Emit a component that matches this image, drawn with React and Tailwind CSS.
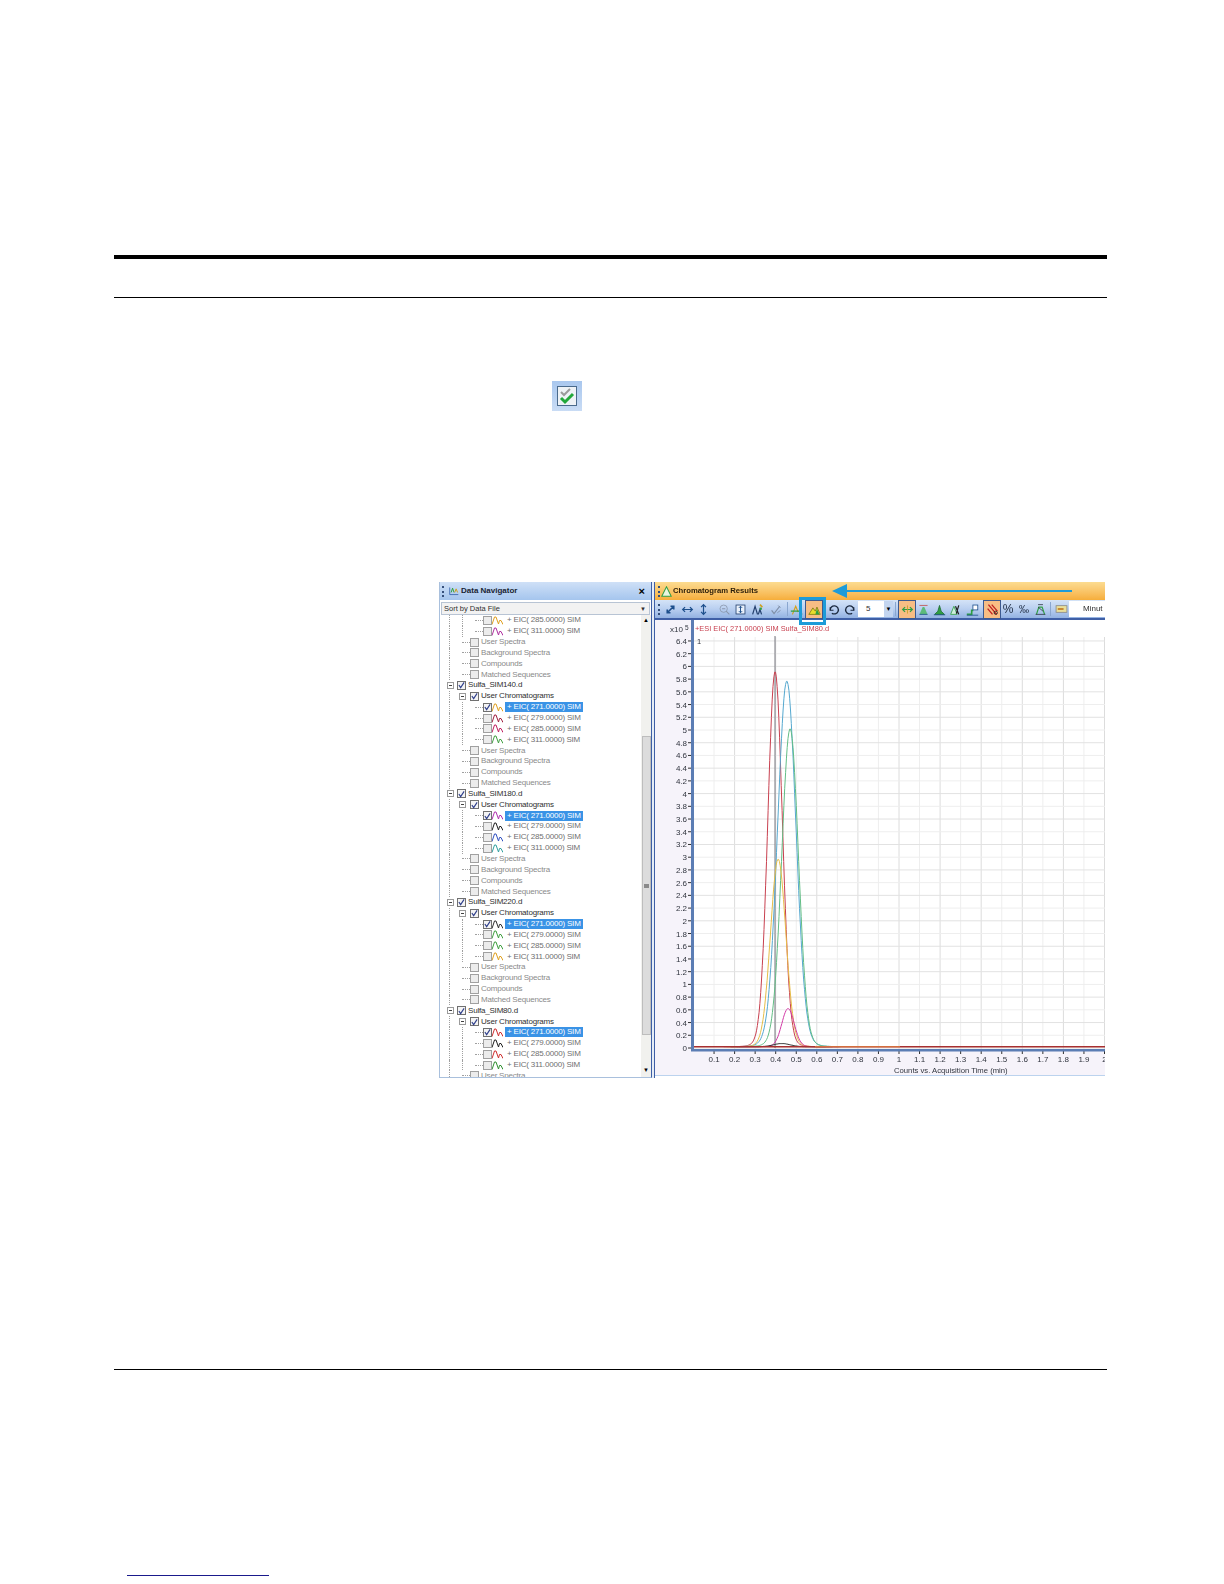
const FONT = "font-['Liberation_Sans',Arial,sans-serif]"

// tree data, one entry per data file
const FILES = [
  { name: 'Sulfa_SIM140.d', colors: ['#e0a020', '#a02040', '#c02060', '#40a040'] },
  { name: 'Sulfa_SIM180.d', colors: ['#b030b0', '#202020', '#3050c0', '#30a0a0'] },
  { name: 'Sulfa_SIM220.d', colors: ['#303030', '#40a040', '#40a040', '#e0a020'] },
  { name: 'Sulfa_SIM80.d', colors: ['#d03030', '#202020', '#d03030', '#309030'] },
]
const IONS = ['271.0000', '279.0000', '285.0000', '311.0000']
const EXTRAS = ['User Spectra', 'Background Spectra', 'Compounds', 'Matched Sequences']

const x = (t) => 693.5 + 205.5 * t
const y = (v) => 1048 - 63.6 * v

const CURVES = [
  { peak: 0.397, h: 5.9, s: 0.035, color: '#c8404f' },
  { peak: 0.454, h: 5.75, s: 0.044, color: '#55a8cf' },
  { peak: 0.47, h: 5.0, s: 0.04, color: '#62bd85' },
  { peak: 0.412, h: 2.95, s: 0.037, color: '#e6bd48' },
  { peak: 0.46, h: 0.6, s: 0.03, color: '#d23aa6' },
  { peak: 0.43, h: 0.05, s: 0.04, color: '#222222' },
]

function curvePath({ peak, h, s }) {
  let d = ''
  for (let t = peak - 0.25; t <= peak + 0.25; t += 0.004) {
    const g = (sd, a) => a * Math.exp(-((t - peak) ** 2) / (2 * sd * sd))
    // small wide tail under the peak, the real traces do not end sharply
    const v = g(s, h * 0.98) + g(s * 1.9, h * 0.02) + 0.02
    d += `${d ? 'L' : 'M'}${x(t).toFixed(1)} ${y(v).toFixed(1)}`
  }
  return d
}

function Check({ checked, dim }) {
  return (
    <span className={`w-[9px] h-[9px] shrink-0 border flex items-center justify-center ${dim ? 'border-[#a0a0a0] bg-[#ececec]' : 'border-[#707070] bg-[#f4f4f4]'}`}>
      {checked && (
        <svg viewBox="0 0 8 8" className="w-[8px] h-[8px]">
          <path d="M1 4l2 3 4-6" fill="none" stroke="#30408c" strokeWidth="1.3" />
        </svg>
      )}
    </span>
  )
}

function Expander() {
  return (
    <span className="w-[7px] h-[7px] shrink-0 border border-[#9a9a9a] bg-white flex items-center justify-center">
      <span className="w-[3px] h-px bg-[#404040]" />
    </span>
  )
}

function Guide({ w }) {
  return <span className={`shrink-0 border-l border-dotted border-[#a0a0a0] ${w}`} />
}

function Dash({ w }) {
  return <span className={`shrink-0 self-center border-t border-dotted border-[#a0a0a0] ${w}`} />
}

function Row({ children }) {
  return <div className="flex items-stretch h-[10.85px] pl-[9px] text-[8px] tracking-[-0.2px] leading-[10px] whitespace-nowrap">{children}</div>
}

function RootRow({ name }) {
  return (
    <div className="flex items-center h-[10.85px] pl-[7px] text-[8px] tracking-[-0.2px] leading-[10px] whitespace-nowrap text-[#303030]">
      <Expander />
      <span className="w-[3px]" />
      <Check checked />
      <span className="ml-[2px]">{name}</span>
    </div>
  )
}

function ChromHeader() {
  return (
    <Row>
      <Guide w="w-[10px]" />
      <span className="self-center flex items-center">
        <Expander />
        <span className="w-[4px]" />
        <Check checked />
        <span className="ml-[2px] text-[#303030]">User Chromatograms</span>
      </span>
    </Row>
  )
}

function ExtraRow({ label }) {
  return (
    <Row>
      <Guide w="w-[13px]" />
      <Dash w="w-[8px]" />
      <span className="self-center flex items-center">
        <Check dim />
        <span className="ml-[2px] text-[#8a8a8a]">{label}</span>
      </span>
    </Row>
  )
}

function IonRow({ ion, color, selected }) {
  return (
    <Row>
      <Guide w="w-[13px]" />
      <Guide w="w-[13px]" />
      <Dash w="w-[8px]" />
      <span className="self-center flex items-center">
        <Check checked={selected} dim={!selected} />
        <svg viewBox="0 0 11 9" className="w-[11px] h-[9px] shrink-0">
          <path d="M0 8.5L2.5 1 4 1 6.5 8 7.5 4.5 9 4.5 11 8.5" fill="none" stroke={color} strokeWidth="1" />
        </svg>
        <span className={`ml-[2px] px-[2px] w-[78px] ${selected ? 'bg-[#3a93e6] text-white' : 'text-[#6f6f6f]'}`}>
          + EIC( {ion}) SIM
        </span>
      </span>
    </Row>
  )
}

function Tree() {
  return (
    <div className="flex-1 min-w-0 overflow-hidden">
      <IonRow ion="285.0000" color="#e0a020" />
      <IonRow ion="311.0000" color="#b030a0" />
      {EXTRAS.map((e) => <ExtraRow key={e} label={e} />)}
      {FILES.map((f, i) => (
        <div key={f.name}>
          <RootRow name={f.name} />
          <ChromHeader />
          {IONS.map((ion, j) => <IonRow key={ion} ion={ion} color={f.colors[j]} selected={j === 0} />)}
          {(i < 3 ? EXTRAS : EXTRAS.slice(0, 1)).map((e) => <ExtraRow key={e} label={e} />)}
        </div>
      ))}
    </div>
  )
}

function Scrollbar() {
  return (
    <div className="w-[10px] bg-[#f1f1ee] flex flex-col items-center">
      <span className="h-[10px] flex items-center text-[6px] text-black leading-none">▲</span>
      <div className="mt-[111px] w-[9px] h-[299px] bg-[#dcdcdc] border border-[#bdbdbd] flex items-center justify-center">
        <span className="w-[5px] h-[4px] border-y-2 border-[#8a8a8a]" />
      </div>
      <span className="mt-[30px] h-[10px] flex items-center text-[6px] text-black leading-none">▼</span>
    </div>
  )
}

function Grip({ className = '' }) {
  return <span className={`w-px h-[11px] border-l-2 border-dotted border-[#36507c] shrink-0 ${className}`} />
}

function Sep() {
  return <span className="w-px h-[14px] bg-[#8aa6cf] shrink-0" />
}

function Ic({ on, children, className = '' }) {
  return (
    <span className={`w-4 h-[17px] shrink-0 flex items-center justify-center ${on ? 'bg-[#f7bd84] outline outline-1 outline-[#3c5a90]' : ''} ${className}`}>
      <svg viewBox="0 0 16 16" className="w-[13px] h-[13px]" fill="none">{children}</svg>
    </span>
  )
}

const NAVY = '#1d4f8c'
const GREEN = '#2f9e44'

function Toolbar() {
  return (
    <div className="h-[18px] flex items-center bg-gradient-to-b from-[#d4e3f7] via-[#b9cff0] to-[#93b2e2] border-b-2 border-[#3f5fa6] pl-[3px] box-content">
      <Grip />
      <span className="w-[2px]" />
      <Ic><path d="M4 12l8-8M8 4h4v4M4 8v4h4" stroke={NAVY} strokeWidth="2" /></Ic>
      <Ic className="ml-px"><path d="M2 8h12M5 5L2 8l3 3M11 5l3 3-3 3" stroke={NAVY} strokeWidth="1.5" /></Ic>
      <Ic><path d="M8 2v12M5 5l3-3 3 3M5 11l3 3 3-3" stroke={NAVY} strokeWidth="1.5" /></Ic>
      <Ic className="ml-[5px]"><circle cx="7" cy="7" r="4.5" stroke="#8a97ad" /><path d="M5 7h4M10 10l4 4" stroke="#8a97ad" strokeWidth="1.3" /></Ic>
      <Ic><rect x="2.5" y="2.5" width="11" height="11" stroke="#24406e" fill="#eaf1fb" /><path d="M8 4v8M6 6l2-2 2 2M6 10l2 2 2-2" stroke={NAVY} strokeWidth="1.2" /></Ic>
      <Ic className="ml-px"><path d="M2 14L5 4l3 10M9 14l2-6 2 6" stroke="#24406e" strokeWidth="1.5" /><path d="M11 2l3 3" stroke="#d0a020" strokeWidth="2" /><circle cx="12" cy="7" r="1.5" fill={GREEN} /></Ic>
      <Ic className="ml-[3px]"><path d="M2 9l3 4 7-9" stroke="#7f8ea6" strokeWidth="1.5" /><path d="M9 12l4-3M10 3l3 3" stroke="#7f8ea6" /></Ic>
      <span className="w-[3px]" />
      <Sep />
      <Ic><path d="M3 14l4-10 3 7" stroke="#d4a017" strokeWidth="1.4" /><path d="M1 10h10l4 4" stroke={GREEN} strokeWidth="1.4" /></Ic>
      <Ic on className="ml-[2px]"><path d="M1 14l5-8 3 4 2-5 4 9z" fill="#e9dd2c" stroke="#7c7a10" /><path d="M9 14l2-7 3 7z" fill={GREEN} /></Ic>
      <Ic className="ml-[3px]"><path d="M4 5v4h4" stroke="#1c2a40" strokeWidth="1.3" /><path d="M4 9a5 5 0 1 1 2 3.5" stroke="#1c2a40" strokeWidth="1.6" /></Ic>
      <Ic className="ml-px"><path d="M12 5v4H8" stroke="#1c2a40" strokeWidth="1.3" /><path d="M12 9a5 5 0 1 0-2 3.5" stroke="#1c2a40" strokeWidth="1.6" /></Ic>
      <span className="w-[26px] h-[16px] bg-white text-[8px] leading-[16px] pl-[8px] text-[#303030] shrink-0">5</span>
      <span className="w-[9px] h-[16px] bg-[#c3d5f0] flex items-center justify-center text-[6px] leading-none shrink-0">▼</span>
      <span className="w-[2px]" />
      <Sep />
      <span className="w-[3px]" />
      <Ic on><path d="M2 8h12M5 5L2 8l3 3M11 5l3 3-3 3" stroke={GREEN} strokeWidth="1.5" /><path d="M8 3v10" stroke="#c8a020" /></Ic>
      <Ic><path d="M3 3h10" stroke="#c0504d" /><path d="M3 14l4-9h2l4 9z" fill="#5cba7a" /><path d="M3 14h10" stroke={NAVY} /></Ic>
      <Ic><path d="M2 14l4-4 2-7 2 7 4 4z" fill={GREEN} stroke="#1d6e30" /><path d="M1 14.5h14" stroke={NAVY} /></Ic>
      <Ic><path d="M2 14l4-10 4 10z" fill="#cfeedd" stroke={GREEN} /><path d="M8 4l4 10M12 3L9 13" stroke="#202020" strokeWidth="1.5" /></Ic>
      <Ic className="ml-px"><path d="M1 14h6V9h2" stroke={GREEN} strokeWidth="2" /><rect x="8.5" y="2.5" width="6" height="6" fill="#fff" stroke={NAVY} /><path d="M1 15h14" stroke={NAVY} /></Ic>
      <span className="w-[4px]" />
      <Ic on><path d="M3 2l10 12M7 2l7 8M2 7l6 7" stroke="#c02020" strokeWidth="1.6" /><circle cx="12" cy="12" r="2" stroke="#202020" /></Ic>
      <span className="w-4 h-[17px] shrink-0 text-center text-[12px] leading-[17px] text-[#1c2a40]">%</span>
      <span className="w-4 h-[17px] shrink-0 text-center text-[10px] leading-[17px] text-[#1c2a40]">‰</span>
      <Ic><path d="M3 14l3-9h4l3 9" stroke={GREEN} strokeWidth="1.5" /><path d="M5 2h6M5 5l6 5M2 14h12" stroke="#303848" /></Ic>
      <span className="w-[2px]" />
      <Sep />
      <span className="w-[3px]" />
      <span className="w-[15px] h-[17px] shrink-0 flex items-center justify-center">
        <svg viewBox="0 0 15 12" className="w-[13px] h-[10px]"><rect x="1" y="2" width="13" height="8" fill="#eadf9a" stroke="#8a8a8a" /><path d="M3 6h7" stroke="#c07820" strokeWidth="2" /></svg>
      </span>
      <span className="flex-1 h-[16px] bg-white text-[8px] leading-[16px] pl-[14px] text-[#303030] overflow-hidden whitespace-nowrap">Minut</span>
    </div>
  )
}

function Chart() {
  const yVals = Array.from({ length: 33 }, (_, i) => i * 0.2)
  const xVals = Array.from({ length: 20 }, (_, i) => (i + 1) / 10)
  return (
    <svg viewBox="655 620 450 456" className="block w-[450px] h-[456px] text-[8px]">
      <rect x="655" y="620" width="37" height="456" fill="#f6f3fa" />
      <rect x="655" y="1051" width="450" height="25" fill="#f6f3fa" />
      {xVals.map((t, i) => (
        <g key={t}>
          <line x1={x(t)} x2={x(t)} y1="637" y2="1049" stroke={i % 2 ? '#dcdcdc' : '#eeeeee'} />
          <line x1={x(t)} x2={x(t)} y1="1051" y2="1054" stroke="#303030" />
          <text x={x(t)} y="1062" textAnchor="middle" fill="#30343e">{+t.toFixed(1)}</text>
        </g>
      ))}
      {yVals.map((v, i) => (
        <g key={v}>
          <line x1="694" x2="1105" y1={y(v)} y2={y(v)} stroke={i % 2 ? '#eeeeee' : '#e2e2e2'} />
          <line x1="688" x2="692" y1={y(v)} y2={y(v)} stroke="#303030" />
          <text x="687" y={y(v) + 3} textAnchor="end" fill="#30343e">{+v.toFixed(1)}</text>
        </g>
      ))}
      <line x1="775" x2="775" y1="636" y2="1048" stroke="#77777f" />
      {CURVES.map((c) => <path key={c.color} d={curvePath(c)} fill="none" stroke={c.color} strokeWidth="1" />)}
      <path d={`M694 ${y(0.02)}H1105`} stroke="#a83030" strokeWidth="1.5" />
      <path d={`M815 ${y(0.02)}H900`} stroke="#e08040" strokeWidth="1" />
      <rect x="691" y="620" width="3" height="431" fill="#5b7db4" />
      <rect x="691" y="1049" width="414" height="2.5" fill="#5b7db4" />
      <text x="670" y="632" fill="#30343e">x10</text>
      <text x="685" y="630" fontSize="6.5" fill="#30343e">5</text>
      <text x="695" y="631" fontSize="7.4" fill="#c8404f">+ESI EIC( 271.0000) SIM Sulfa_SIM80.d</text>
      <text x="697" y="644" fontSize="7.5" fill="#30343e">1</text>
      <text x="894" y="1073" fontSize="7.7" fill="#30343e">Counts vs. Acquisition Time (min)</text>
      <rect x="655" y="1075" width="450" height="1" fill="#bcd3ee" />
    </svg>
  )
}

export default function App() {
  return (
    <div className={`${FONT} w-[1224px] h-[1584px] bg-white pt-[255px] overflow-hidden`}>
      <div className="ml-[114px] w-[993px] h-1 bg-black" />
      <div className="ml-[114px] w-[993px] h-px bg-black mt-[38px]" />

      <div className="ml-[552px] mt-[83px] w-[30px] h-[30px] bg-gradient-to-b from-[#a9c7ee] to-[#c9dcf5] flex items-center justify-center">
        <svg viewBox="0 0 20 20" className="w-5 h-5">
          <rect x="0.5" y="0.5" width="19" height="19" fill="#eef2f6" stroke="#4a6a8c" />
          <path d="M4 6l3 3 6-6" fill="none" stroke="#9a9a9a" strokeWidth="2" />
          <path d="M4 12l4 4 8-8" fill="none" stroke="#22a83a" strokeWidth="3" />
        </svg>
      </div>

      <div className="ml-[439px] mt-[171px] w-[666px] h-[496px] flex relative overflow-hidden blur-[0.3px]">
        <div className="w-[213px] flex flex-col border-l border-r border-b border-l-[#a9c0dd] border-r-[#3f5fa6] border-b-[#a9c0dd] bg-white">
          <div className="h-[18px] flex items-center bg-gradient-to-b from-[#cfe0f7] to-[#a5c5ee] pl-[2px] pr-[6px]">
            <Grip />
            <svg viewBox="0 0 14 12" className="w-[10px] h-[10px] ml-[5px]">
              <path d="M1 11V1M1 11h12" stroke="#2050a0" />
              <path d="M3 8l2-6 2 6" fill="none" stroke="#30a040" strokeWidth="1.4" />
              <path d="M8 8l2-5 2 5" fill="none" stroke="#d0a020" strokeWidth="1.4" />
            </svg>
            <span className="ml-[2px] text-[8px] font-bold text-[#1a2433] flex-1">Data Navigator</span>
            <span className="text-[11px] font-bold leading-none text-black">×</span>
          </div>
          <div className="mt-[2px] mx-px h-[13px] bg-[#f2f2f2] border border-[#b8c4d4] flex items-center justify-between pl-[2px] text-[7.5px] text-[#303030]">
            <span>Sort by Data File</span>
            <span className="text-[6px] leading-none mr-[3px]">▼</span>
          </div>
          <div className="flex-1 min-h-0 flex overflow-hidden">
            <Tree />
            <Scrollbar />
          </div>
        </div>

        <div className="w-[2px] bg-[#e6edf6]" />

        <div className="w-[451px] flex flex-col border-l border-[#3f5fa6]">
          <div className="h-[18px] flex items-center bg-gradient-to-b from-[#fcdc90] to-[#f6ae3a] pl-[3px]">
            <Grip />
            <svg viewBox="0 0 14 14" className="w-[11px] h-[11px] ml-px">
              <path d="M1 13L7 1l6 12z" fill="#eaf6e0" stroke="#2f9e44" strokeWidth="1.3" />
            </svg>
            <span className="ml-px text-[7.7px] font-bold text-[#2a1c08]">Chromatogram Results</span>
          </div>
          <Toolbar />
          <Chart />
        </div>

        {/* cyan call-outs lying over the screenshot */}
        <div className="absolute left-[360px] top-[15px] w-[27px] h-[28px] border-[3px] border-[#1d9bd8]" />
        <div className="absolute left-[393px] top-[2px] w-[240px] flex items-center">
          <span className="w-0 h-0 border-y-[7px] border-y-transparent border-r-[15px] border-r-[#1d9bd8]" />
          <span className="flex-1 h-[2.5px] bg-[#1d9bd8]" />
        </div>
      </div>

      <div className="ml-[114px] w-[993px] h-px bg-black mt-[291px]" />
      <div className="ml-[127px] w-[142px] h-px bg-[#1a1a8c] mt-[205px]" />
    </div>
  )
}
